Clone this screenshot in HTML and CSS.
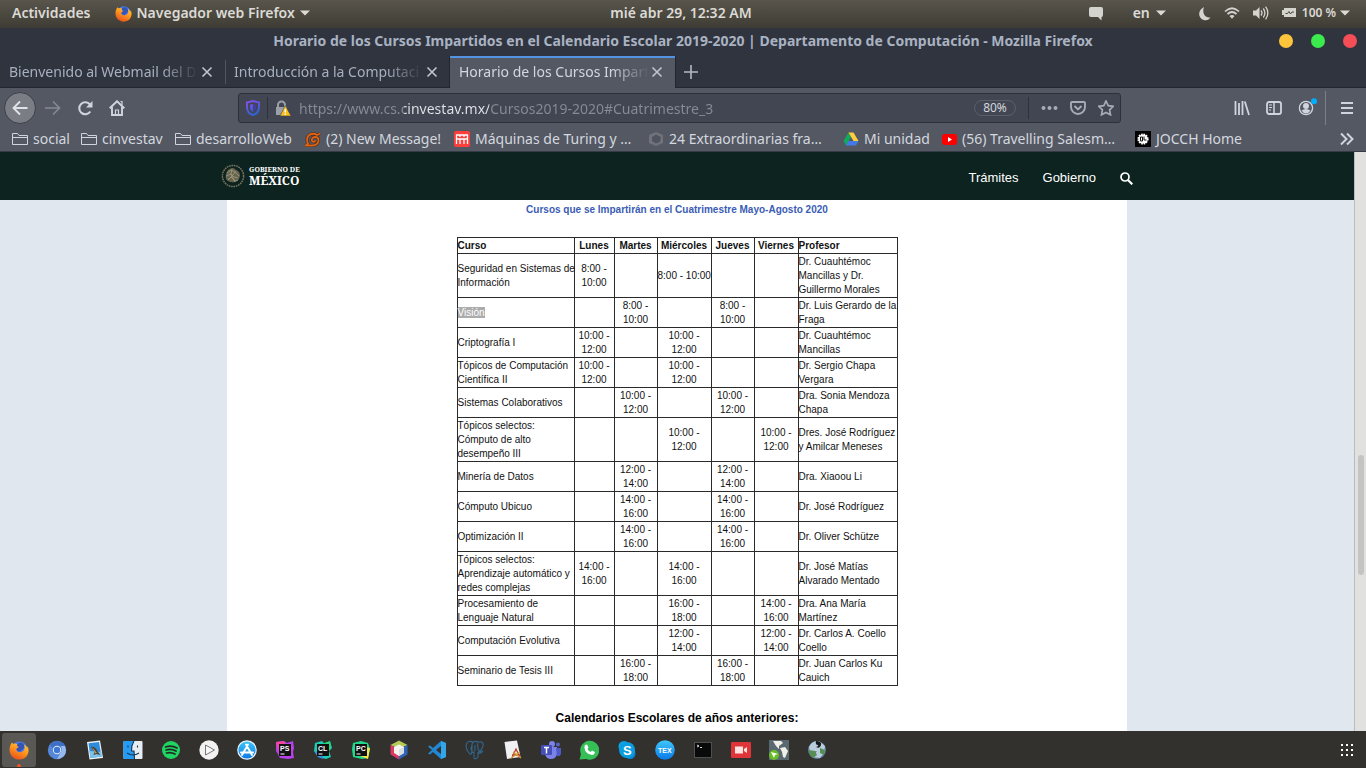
FILE: index.html
```html
<!DOCTYPE html>
<html lang="es">
<head>
<meta charset="utf-8">
<title>Horario de los Cursos Impartidos en el Calendario Escolar 2019-2020</title>
<link rel="stylesheet" href="styles.css">
</head>
<body>
<svg class="defs" width="0" height="0" aria-hidden="true">
  <defs>
    <linearGradient id="fox" x1="0.8" y1="0" x2="0.3" y2="1"><stop offset="0" stop-color="#ffd03a"/><stop offset="0.45" stop-color="#ff9a1f"/><stop offset="1" stop-color="#e8501c"/></linearGradient>
    <linearGradient id="sky" x1="0" y1="0" x2="0" y2="1"><stop offset="0" stop-color="#3fc8fb"/><stop offset="1" stop-color="#0a78e6"/></linearGradient>
    <linearGradient id="shield" x1="0" y1="0" x2="0.4" y2="1"><stop offset="0" stop-color="#8a4de8"/><stop offset="1" stop-color="#2f63d8"/></linearGradient>
    <symbol id="firefox" viewBox="0 0 20 20">
      <circle cx="10.4" cy="9.4" r="8" fill="#4a7be8"/>
      <path d="M8 4c1.500-1.500 5-2 6.500 0s1 4-.5 5-2 3-4.500 2.500S7 8 8 4z" fill="#3554b8"/>
      <path d="M3 2.500L4.500 4C6 3.200 7.500 3.600 8.500 4.600 7.500 5.400 8 6.500 9.800 6.700 9.200 8 7.200 8 7.200 9.500c.6 3 4.800 3.700 7 1.500 1.800-1.800 1.800-4 .8-6.500 2 1 2.800 2.300 3.200 4l.3-2.500C20 9 20 13 17.600 16.300 14.500 20.500 6.500 21 2.500 16 -.5 12 .2 6 3 2.500z" fill="url(#fox)"/>
    </symbol>
    <symbol id="folder" viewBox="0 0 16 16"><path d="M.5 13.500V2.500h5l1.500 2h8.500v9zM.5 6.500h15" fill="none" stroke="#d0d4dc"/></symbol>
    <symbol id="close" viewBox="0 0 12 12"><path d="M1.500 1.500l9 9M10.500 1.500l-9 9" stroke="#c0c5ce" stroke-width="1.600" fill="none"/></symbol>
    <symbol id="down" viewBox="0 0 10 6"><path d="M0 .5h10L5 5.500z" fill="#dcdad5"/></symbol>
  </defs>
</svg>

<header class="topbar">
  <div class="top-left">
    <button class="plain">Actividades</button>
    <button class="plain app-menu"><svg width="17" height="17"><use href="#firefox"/></svg>Navegador web Firefox<svg width="10" height="6"><use href="#down"/></svg></button>
  </div>
  <button class="plain clock">mié abr 29, 12:32 AM</button>
  <div class="top-right">
    <button class="plain bubble" aria-label="Mensajes"><svg width="14" height="15" viewBox="0 0 14 15"><path d="M2 1h10q2 0 2 2v6q0 2-1.500 2v3.500L9 11H2q-2 0-2-2V3q0-2 2-2z" fill="#d5d3ce"/></svg></button>
    <button class="plain lang">en<svg width="10" height="6"><use href="#down"/></svg></button>
    <button class="plain status" aria-label="Sistema">
      <svg width="12" height="15" viewBox="0 0 12 15"><path d="M5 1C-1 4-1.500 11 4 13.700c3.500 1.300 6 0 7.500-2.200C6 12 2.800 7 5 1z" fill="#d5d3ce"/></svg>
      <svg width="16" height="14" viewBox="0 0 16 14"><g fill="none" stroke="#d5d3ce" stroke-width="1.700"><path d="M1 5.500q7-6.500 14 0M3.500 8q4.500-4 9 0"/></g><path d="M5.500 10q2.500-2 5 0L8 12.700z" fill="#d5d3ce"/></svg>
      <svg width="16" height="14" viewBox="0 0 16 14"><path d="M0 4.500h3l3.500-3.500v12L3 9.500H0z" fill="#d5d3ce"/><g fill="none" stroke="#d5d3ce" stroke-width="1.300"><path d="M8 4.500q2 2.500 0 5M10.300 2.500q3.200 4.500 0 9M12.600.7q4.500 6.300 0 12.600"/></g></svg>
      <svg width="14" height="10" viewBox="0 0 14 10"><path d="M2 0h12v9H2V7H0V2h2z" fill="#d5d3ce"/><path d="M3.500 5.500h2L7 3.500l1.500 2.500L10 4h2" fill="none" stroke="#4b4840"/></svg>
      <span>100 %</span><svg width="10" height="6"><use href="#down"/></svg>
    </button>
  </div>
</header>

<div class="titlebar">
  <span class="title">Horario de los Cursos Impartidos en el Calendario Escolar 2019-2020 | Departamento de Computación - Mozilla Firefox</span>
  <div class="window-buttons"><button class="min" aria-label="Minimizar"></button><button class="max" aria-label="Maximizar"></button><button class="quit" aria-label="Cerrar"></button></div>
</div>

<nav class="tabs" aria-label="Pestañas">
  <div class="tab"><a href="#webmail">Bienvenido al Webmail del D</a><button class="plain" aria-label="Cerrar pestaña"><svg width="12" height="12"><use href="#close"/></svg></button></div>
  <div class="tab divided"><a href="#intro">Introducción a la Computaci</a><button class="plain" aria-label="Cerrar pestaña"><svg width="12" height="12"><use href="#close"/></svg></button></div>
  <div class="tab active"><a href="#horario">Horario de los Cursos Impart</a><button class="plain" aria-label="Cerrar pestaña"><svg width="12" height="12"><use href="#close"/></svg></button></div>
  <button class="plain new-tab" aria-label="Nueva pestaña"><svg width="14" height="14" viewBox="0 0 14 14"><path d="M7 0v14M0 7h14" stroke="#b4b9c3" stroke-width="1.600"/></svg></button>
</nav>

<div class="toolbar">
  <div class="nav-buttons">
    <button class="plain back" aria-label="Atrás"><svg width="16" height="16" viewBox="0 0 16 16"><path d="M15.500 8H1.500M8 1.500L1.500 8 8 14.500" fill="none" stroke="#dfe2e8" stroke-width="1.900"/></svg></button>
    <button class="plain" aria-label="Adelante"><svg width="16" height="16" viewBox="0 0 16 16"><path d="M0 8h14.500M8 1.500L14.500 8 8 14.500" fill="none" stroke="#858993" stroke-width="1.700"/></svg></button>
    <button class="plain" aria-label="Recargar"><svg width="16" height="16" viewBox="0 0 16 16"><path d="M13.300 11.500A6 6 0 1 1 13 4.500" fill="none" stroke="#d0d4dc" stroke-width="2.100"/><path d="M15.500 1v6.500H9z" fill="#d0d4dc"/></svg></button>
    <button class="plain" aria-label="Inicio"><svg width="16" height="16" viewBox="0 0 16 16"><path d="M.7 8.300L8 1.200l7.300 7.100M3 7v8h10V7" fill="none" stroke="#d0d4dc" stroke-width="1.900"/><path d="M6.500 15V10h3v5M11.500 1.500h1.500V5" fill="none" stroke="#d0d4dc" stroke-width="1.200"/></svg></button>
  </div>
  <div class="address">
    <svg width="14" height="16" viewBox="0 0 14 16"><path d="M7 1L13 2.500V7c0 4-2.500 7-6 8-3.500-1-6-4-6-8V2.500z" fill="none" stroke="url(#shield)" stroke-width="2"/><path d="M7 4l-3 .8V7c0 2.500 1 4 3 5z" fill="url(#shield)"/><path d="M7.500 4L10 4.800V7c0 2.500-1 4-2.500 5z" fill="#493ba5"/></svg>
    <span class="sep first"></span>
    <svg class="lock" width="16" height="16" viewBox="0 0 16 16"><path d="M3 8V5a3.500 3.500 0 0 1 7 0v3" fill="none" stroke="#9a9fa8" stroke-width="2"/><path d="M1 7h11v8H1z" fill="#9a9fa8"/><path d="M10.300 5.500L16 16H5z" fill="#ffbf1a" stroke="#414652" stroke-width=".6"/><path d="M10.300 9v3.500M10.300 13.500V15" stroke="#fff" stroke-width="1.400"/></svg>
    <input class="url" type="text" aria-label="Dirección" value="https://www.cs.cinvestav.mx/Cursos2019-2020#Cuatrimestre_3">
    <button class="plain zoom">80%</button>
    <span class="sep"></span>
    <button class="plain" aria-label="Acciones"><svg width="17" height="6" viewBox="0 0 17 6"><g fill="#a6abb6"><circle cx="2.500" cy="3" r="2"/><circle cx="8.500" cy="3" r="2"/><circle cx="14.500" cy="3" r="2"/></g></svg></button>
    <button class="plain" aria-label="Pocket"><svg width="16" height="16" viewBox="0 0 16 16"><path d="M2 2h12q1 0 1 1v4a7 7 0 0 1-14 0V3q0-1 1-1zM4.500 6L8 9.500 11.500 6" fill="none" stroke="#a6abb6" stroke-width="1.900"/></svg></button>
    <button class="plain" aria-label="Marcador"><svg width="16" height="16" viewBox="0 0 16 16"><path d="M8 1l2.200 4.600 5 .7-3.600 3.500.9 5L8 12.400l-4.500 2.400.9-5L.8 6.300l5-.7z" fill="none" stroke="#a6abb6" stroke-width="1.700"/></svg></button>
  </div>
  <div class="tools">
    <button class="plain" aria-label="Biblioteca"><svg width="16" height="16" viewBox="0 0 16 16"><path d="M1.500 1v14M5 3v12M8.500 1v14M10.800 1.500L15 15" stroke="#d0d4dc" stroke-width="1.800"/></svg></button>
    <button class="plain" aria-label="Barra lateral"><svg width="16" height="14" viewBox="0 0 16 14"><rect x="1" y="1" width="14" height="12" rx="2" fill="none" stroke="#d0d4dc" stroke-width="1.800"/><path d="M8 1v12" stroke="#d0d4dc" stroke-width="1.500"/><path d="M3 4h3M3 6.500h3M3 9h2" stroke="#d0d4dc"/></svg></button>
    <button class="plain" aria-label="Cuenta"><svg width="20" height="20" viewBox="0 0 20 20"><circle cx="8" cy="10" r="6.600" fill="none" stroke="#d0d4dc" stroke-width="1.300"/><circle cx="8" cy="8" r="3" fill="#d0d4dc"/><path d="M3.500 12.500q4.500-3 9 0-2 3-4.500 3t-4.500-3z" fill="#d0d4dc"/><circle cx="16" cy="3.200" r="3" fill="#00aeff"/></svg></button>
    <span class="tool-sep"></span>
    <button class="plain" aria-label="Menú"><svg width="12" height="12" viewBox="0 0 12 12"><path d="M0 1h12M0 6h12M0 11h12" stroke="#d0d4dc" stroke-width="2"/></svg></button>
  </div>
</div>

<nav class="bookmarks" aria-label="Marcadores">
  <a href="#b1"><svg width="16" height="16"><use href="#folder"/></svg>social</a>
  <a href="#b2"><svg width="16" height="16"><use href="#folder"/></svg>cinvestav</a>
  <a href="#b3"><svg width="16" height="16"><use href="#folder"/></svg>desarrolloWeb</a>
  <a href="#b4"><svg width="16" height="16" viewBox="0 0 16 16"><g id="leaf" fill="none" stroke-linejoin="round"><path d="M15 2.500L12 4C8 1.500 3 3 2 8c0 2 0 3.500 1 4.500L1 14.500h6c4 0 7-2.500 6.500-6S8 5 7 8s2.500 3.500 3.500 1.500" stroke="#4a2717" stroke-width="3"/><path d="M15 2.500L12 4C8 1.500 3 3 2 8c0 2 0 3.500 1 4.500L1 14.500h6c4 0 7-2.500 6.500-6S8 5 7 8s2.500 3.500 3.500 1.500" stroke="#df6414" stroke-width="1.800"/></g></svg>(2) New Message!</a>
  <a href="#b5"><svg width="16" height="16" viewBox="0 0 16 16"><rect width="16" height="16" rx="2" fill="#fa3f3d"/><path d="M2 4h12M2.500 4v9M6 8v5M10 8v5M13.500 4v9M2 8h12M6 4v2M10 4v2" stroke="#fff" stroke-width="1.300"/></svg>Máquinas de Turing y …</a>
  <a href="#b6"><svg width="16" height="16" viewBox="0 0 16 16"><path d="M1 4l7-3 7 3v8l-7 3-7-3z" fill="#71737a"/><path d="M4 6l4-2.500L13 6l-1 5-4 1.500L4 10z" fill="#50545f"/></svg>24 Extraordinarias fra…</a>
  <a href="#b7"><svg width="16" height="16" viewBox="0 0 16 16"><path d="M5.500 1.500L.5 10 3 14.500 8 6z" fill="#12a85d"/><path d="M5.500 1.500h5l5 8.500h-5z" fill="#ffce3d"/><path d="M5.500 10h10L13 14.500H3z" fill="#427be8"/></svg>Mi unidad</a>
  <a href="#b8"><svg width="16" height="16" viewBox="0 0 16 16"><rect x="1" y="3" width="15" height="11" rx="3" fill="#f00"/><path d="M7 6l4 2.500L7 11z" fill="#fff"/></svg>(56) Travelling Salesm…</a>
  <a href="#b9"><svg width="16" height="16" viewBox="0 0 16 16"><path d="M0 0h16v16H0z"/><circle cx="8" cy="8" r="4.600" fill="#fff" stroke="#fff" stroke-width="2" stroke-dasharray="1.600 .8"/><path d="M5.500 6h2v4h-2zM9 5.500V9h2.500" fill="none" stroke="#111"/></svg>JOCCH Home</a>
  <button class="plain" aria-label="Más marcadores"><svg width="14" height="14" viewBox="0 0 14 14"><path d="M1 1.500L6.500 7 1 12.500M7 1.500L12.500 7 7 12.500" fill="none" stroke="#d0d4dc" stroke-width="2"/></svg></button>
</nav>

<main class="viewport">
  <div class="page">
    <header class="site-header">
      <div class="site-inner">
        <a class="logo" href="#gob">
          <svg width="24" height="24" viewBox="0 0 24 24"><circle cx="12" cy="12" r="10.600" fill="none" stroke="#77735f" stroke-width="1.500" stroke-dasharray="1.700 .7"/><path d="M7 6q5-4 8 0 4 1 4 6-1 5-5 6-6 1-9-3-1-5 2-9z" fill="#66644f"/><path d="M6 9l4-3 4 2 4 4M5 12l5-2 3 3 4 1M7 16l3-3 4 4 3-1M11 5l-1 5 4 8M15 7l-4 5-4 4" fill="none" stroke="#a19b80" stroke-width=".8"/></svg>
          <span class="logo-text"><span class="gob">GOBIERNO DE</span><span class="mex">MÉXICO</span></span>
        </a>
        <nav class="site-nav"><a href="#tramites">Trámites</a><a href="#gobierno">Gobierno</a><a href="#buscar" aria-label="Buscar"><svg width="13" height="13" viewBox="0 0 13 13"><circle cx="5" cy="5" r="4" fill="none" stroke="#fff" stroke-width="1.700"/><path d="M8 8l4.300 4.300" stroke="#fff" stroke-width="2.200"/></svg></a></nav>
      </div>
    </header>
    <article class="content">
      <h2>Cursos que se Impartirán en el Cuatrimestre Mayo-Agosto 2020</h2>
      <table>
        <colgroup><col class="c1"><col class="c2"><col class="c3"><col class="c4"><col class="c3"><col class="c5"><col class="c6"></colgroup>
        <thead><tr><th>Curso</th><th>Lunes</th><th>Martes</th><th>Miércoles</th><th>Jueves</th><th>Viernes</th><th>Profesor</th></tr></thead>
        <tbody>
          <tr class="tall"><td>Seguridad en Sistemas de<br>Información</td><td>8:00 -<br>10:00</td><td></td><td>8:00 - 10:00</td><td></td><td></td><td>Dr. Cuauhtémoc<br>Mancillas y Dr.<br>Guillermo Morales</td></tr>
          <tr><td><mark>Visión</mark></td><td></td><td>8:00 -<br>10:00</td><td></td><td>8:00 -<br>10:00</td><td></td><td>Dr. Luis Gerardo de la<br>Fraga</td></tr>
          <tr><td>Criptografía I</td><td>10:00 -<br>12:00</td><td></td><td>10:00 -<br>12:00</td><td></td><td></td><td>Dr. Cuauhtémoc<br>Mancillas</td></tr>
          <tr><td>Tópicos de Computación<br>Científica II</td><td>10:00 -<br>12:00</td><td></td><td>10:00 -<br>12:00</td><td></td><td></td><td>Dr. Sergio Chapa<br>Vergara</td></tr>
          <tr><td>Sistemas Colaborativos</td><td></td><td>10:00 -<br>12:00</td><td></td><td>10:00 -<br>12:00</td><td></td><td>Dra. Sonia Mendoza<br>Chapa</td></tr>
          <tr class="tall"><td>Tópicos selectos:<br>Cómputo de alto<br>desempeño III</td><td></td><td></td><td>10:00 -<br>12:00</td><td></td><td>10:00 -<br>12:00</td><td>Dres. José Rodríguez<br>y Amilcar Meneses</td></tr>
          <tr><td>Minería de Datos</td><td></td><td>12:00 -<br>14:00</td><td></td><td>12:00 -<br>14:00</td><td></td><td>Dra. Xiaoou Li</td></tr>
          <tr><td>Cómputo Ubicuo</td><td></td><td>14:00 -<br>16:00</td><td></td><td>14:00 -<br>16:00</td><td></td><td>Dr. José Rodríguez</td></tr>
          <tr><td>Optimización II</td><td></td><td>14:00 -<br>16:00</td><td></td><td>14:00 -<br>16:00</td><td></td><td>Dr. Oliver Schütze</td></tr>
          <tr class="tall"><td>Tópicos selectos:<br>Aprendizaje automático y<br>redes complejas</td><td>14:00 -<br>16:00</td><td></td><td>14:00 -<br>16:00</td><td></td><td></td><td>Dr. José Matías<br>Alvarado Mentado</td></tr>
          <tr><td>Procesamiento de<br>Lenguaje Natural</td><td></td><td></td><td>16:00 -<br>18:00</td><td></td><td>14:00 -<br>16:00</td><td>Dra. Ana María<br>Martínez</td></tr>
          <tr><td>Computación Evolutiva</td><td></td><td></td><td>12:00 -<br>14:00</td><td></td><td>12:00 -<br>14:00</td><td>Dr. Carlos A. Coello<br>Coello</td></tr>
          <tr><td>Seminario de Tesis III</td><td></td><td>16:00 -<br>18:00</td><td></td><td>16:00 -<br>18:00</td><td></td><td>Dr. Juan Carlos Ku<br>Cauich</td></tr>
        </tbody>
      </table>
      <h3>Calendarios Escolares de años anteriores:</h3>
    </article>
  </div>
  <div class="scrollbar"><div class="before"></div><div class="thumb"></div><div class="after"></div></div>
</main>

<footer class="dock">
  <button class="plain running" aria-label="Firefox"><svg width="20" height="20"><use href="#firefox"/></svg></button>
  <button class="plain" aria-label="Chromium"><svg width="20" height="20" viewBox="0 0 20 20"><circle cx="10" cy="10" r="9.200" fill="#5487d8"/><path d="M10 1q6 0 8.300 5H10a4 4 0 0 0-3.800 3L3 4.500Q6 1 10 1z" fill="#3f6fc4"/><path d="M10 19l4-7q1.500-3 0-6h4q3 9-4 12-2 1-4 1z" fill="#98b9ee"/><circle cx="10" cy="10" r="4.200" fill="#dce8fb"/><circle cx="10" cy="10" r="3.200" fill="#3f76d2"/></svg></button>
  <button class="plain" aria-label="Correo"><svg width="20" height="20" viewBox="0 0 20 20"><path d="M2 2l13-1.500L18 18 4.500 19.500z" fill="#edf2f5"/><path d="M3.500 3.200L14 2l2.500 14.500L5.500 18z" fill="#2e8bdb"/><path d="M4.500 11l12 1 .3 4.500L5.500 18z" fill="#79c3ec"/><path d="M6 7q4-1 7 5l2.500 3-4-1-3 1 1-3z" fill="#4b4030"/><path d="M7 7l5 6-2 .5z" fill="#b99a69"/></svg></button>
  <button class="plain" aria-label="Archivos"><svg width="20" height="20" viewBox="0 0 20 20"><rect x=".5" y="1" width="19" height="18" rx="1" fill="#e6edf3"/><path d="M1.500 1H11Q8 6 8.500 11H11l.5 8h-10Q.5 19 .5 18V2q0-1 1-1z" fill="#259cf3"/><path d="M11 1Q8 6 8.500 11H11l.5 8M5 5.500v2M14.500 5.500v2M4 13q6 4 12 0" fill="none" stroke="#18344d" stroke-width="1.100"/></svg></button>
  <button class="plain" aria-label="Spotify"><svg width="20" height="20" viewBox="0 0 20 20"><circle cx="10" cy="10" r="9" fill="#1fd662"/><path d="M4.500 7q6-2 11.500 1M5 10q5-1.500 10 1M5.500 13q4.500-1.200 8.500 1" fill="none" stroke="#242824" stroke-width="1.700" stroke-linecap="round"/></svg></button>
  <button class="plain" aria-label="Reproductor"><svg width="20" height="20" viewBox="0 0 20 20"><circle cx="10" cy="10" r="9.700" fill="#f2f2f2"/><path d="M6.500 5l9 5-9 5z" fill="#f8f8f8" stroke="#777"/></svg></button>
  <button class="plain" aria-label="Tienda"><svg width="20" height="20" viewBox="0 0 20 20"><circle cx="10" cy="10" r="9.200" fill="url(#sky)" stroke="#eaf4fc" stroke-width="1.200"/><path d="M11 4.500L5 15M9 4.500L15 15M4 12.500h12" stroke="#fff" stroke-width="1.900" stroke-linecap="round"/></svg></button>
  <button class="plain" aria-label="PhpStorm"><svg width="20" height="20" viewBox="0 0 20 20"><path d="M1 2l8-1 3 2 6-2 1 7-1 4 1 6-6 1-8-1-4-7z" fill="#b641ed"/><path d="M1 2l8-1 2 4-7 8z" fill="#f6459c"/><rect x="4" y="4" width="12" height="12" fill="#111"/><text x="5" y="11" font-size="7">PS</text><path d="M5.500 14h4" stroke="#fff"/></svg></button>
  <button class="plain" aria-label="CLion"><svg width="20" height="20" viewBox="0 0 20 20"><path d="M2 3l7-2 3 3 5-3 2 7-3 3 2 6-5 2-8-2-4-6z" fill="#1bcdb3"/><path d="M1 11l8 3 1 5-5-2z" fill="#398aee"/><path d="M11 3l6-2 1 8-4 2z" fill="#25d77d"/><rect x="4" y="4" width="12" height="12" fill="#111"/><text x="5" y="11" font-size="7">CL</text><path d="M5.500 14h4" stroke="#fff"/></svg></button>
  <button class="plain" aria-label="PyCharm"><svg width="20" height="20" viewBox="0 0 20 20"><path d="M2 3l8-2 7 2 2 6-2 9-6 1-9-2-1-8z" fill="#20d889"/><path d="M13 7l6 1-2 11-8-3z" fill="#f1e84b"/><rect x="4" y="4" width="12" height="12" fill="#111"/><text x="5" y="11" font-size="7">PC</text><path d="M5.500 14h4" stroke="#fff"/></svg></button>
  <button class="plain" aria-label="NetBeans"><svg width="20" height="20" viewBox="0 0 20 20"><path d="M10 .5L18.500 5 10 9 1.500 5z" fill="#b5cb58"/><path d="M1.500 5l8.500 4v10.500l-8.500-5z" fill="#d93b62"/><path d="M18.500 5L10 9v10.500l8.500-5z" fill="#2e65b9"/><path d="M10 4.500l5 2.500v6l-5 3-5-3V7z" fill="#f5f5ed"/><path d="M10 9.500l5-2.500v6l-5 3z" fill="#dadfe4"/></svg></button>
  <button class="plain" aria-label="Visual Studio Code"><svg width="20" height="20" viewBox="0 0 20 20"><path d="M14 1l5 2v14l-5 2L6 12l-3 2.500-2-1L5 10 1 6.500l2-1L6 8zm0 5l-5 4 5 4z" fill="#2188d1"/><path d="M14 1l5 2v14l-5 2z" fill="#35a5ea"/></svg></button>
  <button class="plain" aria-label="PostgreSQL"><svg width="20" height="20" viewBox="0 0 20 20"><path d="M8 2Q3 0 1.500 4T4 13q2 3 3-1V4q2-4 6-2 6-1 5 4-1 4-4 6 3 0 4-1-2 3-5 2v4q-2 3-4 1V12q-2 1-3 0M7 6q-2 2 0 5M13 3q-1 4 1 8M10 5v6" fill="none" stroke="#31668d" stroke-width="1.100"/></svg></button>
  <button class="plain" aria-label="Editor de textos"><svg width="20" height="20" viewBox="0 0 20 20"><path d="M1.500 2L14 .5 17.500 17 4 19z" fill="#f0f1f3"/><path d="M9 18l4-9 4 8M9 15h8" fill="none" stroke="#b83f28" stroke-width="1.300"/><path d="M8 18l9-6M10 12l8 6" stroke="#d69a36" stroke-width="1.300"/></svg></button>
  <button class="plain" aria-label="Teams"><svg width="20" height="20" viewBox="0 0 20 20"><circle cx="17" cy="4.500" r="2" fill="#5964c7"/><circle cx="11" cy="4" r="3" fill="#7b83eb"/><path d="M6 7h10v7q-1 5-6 5t-6-5z" fill="#7b83eb"/><path d="M15 8h5v6q-1 3-4 2z" fill="#5059c9"/><rect y="5" width="11" height="10" rx="1" fill="#464eb8"/><path d="M3 7.500h5M5.500 7.500v6" stroke="#fff" stroke-width="1.500"/></svg></button>
  <button class="plain" aria-label="WhatsApp"><svg width="20" height="20" viewBox="0 0 20 20"><path d="M.5 19.500L2 14A9.500 9.500 0 1 1 7 19z" fill="#35bf57"/><path d="M6 5l2-.5 1.500 3-1 1.500q1 2 3 3l1.500-1.500 3 1.500q-.5 3-3 3Q6 13.500 5.500 8 5.300 6 6 5z" fill="#fff"/></svg></button>
  <button class="plain" aria-label="Skype"><svg width="20" height="20" viewBox="0 0 20 20"><circle cx="7" cy="6.500" r="5.500" fill="#0aa6e9"/><circle cx="13" cy="13.500" r="5.500" fill="#0788d2"/><circle cx="10" cy="10" r="8" fill="#0b9ddf"/><text x="6" y="14.500" font-size="13">S</text></svg></button>
  <button class="plain" aria-label="TeX"><svg width="20" height="20" viewBox="0 0 20 20"><circle cx="10" cy="10" r="9.800" fill="url(#sky)"/><text x="3" y="13" font-size="7">TEX</text></svg></button>
  <button class="plain" aria-label="Terminal"><svg width="20" height="20" viewBox="0 0 20 20"><rect x="1.500" y="2.500" width="17" height="15" fill="#090b0b" stroke="#4c5050"/><path d="M4 5l2 1-2 1M7 7.500h2" fill="none" stroke="#eee" stroke-width=".9"/></svg></button>
  <button class="plain" aria-label="Grabador"><svg width="20" height="20" viewBox="0 0 20 20"><rect y="2" width="20" height="16" rx="1" fill="#df3538"/><path d="M4 6.500h8v7H4zM13 9l3-2v6l-3-2z" fill="#ffe4df"/></svg></button>
  <button class="plain" aria-label="Mapas"><svg width="20" height="20" viewBox="0 0 20 20"><path d="M0 0h20v20H0z" fill="#5a6872"/><path d="M4 1h8l2 2-4 3v3l-3-3zM11 8l5-1 3 4-3 7-2-1-1-5z" fill="#f0f0e9"/><circle cx="5" cy="15" r="5" fill="#68bd24"/><path d="M2 12l7 2-3 1-1 3z" fill="#fff"/></svg></button>
  <button class="plain" aria-label="Mundo"><svg width="20" height="20" viewBox="0 0 20 20"><circle cx="10" cy="10" r="9" fill="#5c7da2"/><path d="M2 7q3-7 10-6l6 5-1 7-4 5-8-1 5-6-7 1z" fill="#b9cddd"/><path d="M2 10l6 1 2 4-4 3q-4-3-4-8zM13 8l5 2-1 5-4-2z" fill="#558e50"/><path d="M9 1q6 0 5 4-1 4-5 2 3-1 2-2-3 0-2-4z" fill="#171b20"/></svg></button>
  <button class="plain apps" aria-label="Mostrar aplicaciones"><svg width="14" height="14" viewBox="0 0 14 14"><path d="M1 2h12M1 7h12M1 12h12" stroke="#fff" stroke-width="2" stroke-dasharray="2 3"/></svg></button>
</footer>
</body>
</html>
```

FILE: styles.css
```css
* { box-sizing: border-box; }
body { margin: 0; height: 100vh; display: flex; flex-direction: column; overflow: hidden; background: #545863; font: 14px/20px "Noto Sans", "Open Sans", sans-serif; color: #d3d7df; }
.defs { position: absolute; }
svg { flex: none; display: block; }
a { color: inherit; text-decoration: none; }
.plain { appearance: none; border: 0; background: none; padding: 0; color: inherit; font: inherit; display: flex; align-items: center; justify-content: center; }

.topbar { flex: none; height: 28px; display: grid; grid-template-columns: 1fr auto 1fr; align-items: center; padding: 0 16px 2px 12px; background: linear-gradient(#59554c, #3e3c34); color: #dcdad5; font-weight: 600; text-shadow: 0 1px 1px #25231e; }
.top-left { display: flex; gap: 24px; }
.app-menu { gap: 5px; }
.top-right { display: flex; justify-content: flex-end; align-items: center; }
.bubble { margin-right: 30px; }
.lang { gap: 6px; margin-right: 33px; }
.status { gap: 13px; font-size: 12px; }
.status span { margin: 0 -9px 0 -7px; }

.titlebar { flex: none; height: 28px; display: flex; align-items: center; padding: 0 9px 2px 0; background: #2f343f; color: #a9b2c1; font-weight: 700; }
.title { flex: 1; padding-left: 87px; text-align: center; white-space: nowrap; overflow: hidden; }
.window-buttons { display: flex; gap: 18px; }
.window-buttons button { width: 14px; height: 14px; padding: 0; border: 0; border-radius: 50%; }
.min { background: #fdc53b; }
.max { background: #3bea4d; }
.quit { background: #f54e56; }

.tabs { flex: none; height: 32px; display: flex; background: #2f343f; box-shadow: inset 0 -1px #22262f; }
.tab { width: 225px; display: flex; align-items: center; gap: 2px; padding: 0 12px 0 9px; color: #a8b0bf; }
.tab a { flex: 1; overflow: hidden; white-space: nowrap; mask-image: linear-gradient(to right, #000 80%, transparent); }
.divided { background: linear-gradient(#50555f, #50555f) 0 50% / 1px 24px no-repeat; }
.active { background: linear-gradient(#5294e2 2px, #545863 2px); color: #d3d7df; box-shadow: -1px 0 #22262f, 1px 0 #22262f; }
.new-tab { width: 32px; }

.toolbar { flex: none; height: 40px; display: flex; align-items: center; padding: 0 13px 0 4px; }
.nav-buttons { display: flex; align-items: center; gap: 16px; flex: 0 0 234px; }
.nav-buttons .back { width: 32px; height: 32px; border: 1px solid #3d4048; border-radius: 50%; background: #7a7d84; margin-right: -7px; }
.address { flex: 1; min-width: 0; height: 30px; display: flex; align-items: center; gap: 12px; padding: 0 6px 0 7px; border: 1px solid #2b303b; border-radius: 3px; background: #414652; }
.sep { flex: none; width: 1px; height: 22px; background: #2c313c; }
.first { margin: 0 -5px; }
.url { flex: 1; min-width: 0; height: 26px; margin-left: -4px; padding: 0; border: 0; outline: 0; font: inherit; color: transparent; background: linear-gradient(to right, #868b96 105px, #e2e5ea 105px, #e2e5ea 190px, #868b96 190px); -webkit-background-clip: text; background-clip: text; }
.zoom { width: 42px; height: 16px; border: 1px solid #5a5f6b; border-radius: 8px; font-size: 12px; line-height: 14px; }
.tools { display: flex; align-items: center; gap: 16px; margin-left: 113px; }
.tool-sep { width: 1px; height: 34px; margin: 0 -1px 0 -9px; background: #7a7e88; }

.bookmarks { flex: none; height: 24px; display: grid; grid-template-columns: 69px 94px 130px 149px 194px 195px 98px 194px 1fr auto; align-items: center; padding: 0 12px 1px; border-bottom: 1px solid #363b48; line-height: 18px; }
.bookmarks a { display: flex; align-items: center; gap: 5px; white-space: nowrap; }

.viewport { flex: 1; min-height: 0; display: flex; font-family: "Liberation Sans", Arial, sans-serif; }
.page { flex: 1; min-width: 0; display: flex; flex-direction: column; align-items: center; background: #e0e7ee; overflow: hidden; }
.site-header { flex: none; align-self: stretch; height: 48px; display: flex; justify-content: center; background: #0d231f; color: #fff; }
.site-inner { width: 912px; display: flex; align-items: center; justify-content: space-between; }
.logo { display: flex; gap: 4px; align-items: center; font-family: "Noto Serif", "Liberation Serif", serif; font-weight: 700; }
.logo-text { display: flex; flex-direction: column; }
.gob { font-size: 7px; line-height: 10px; }
.mex { font-size: 12px; line-height: 12px; }
.site-nav { display: flex; align-items: center; gap: 24px; font-size: 13px; padding-top: 4px; }
.content { flex: 1; width: 900px; max-width: 100%; background: #fff; color: #111; display: flex; flex-direction: column; align-items: center; }
h2 { margin: 0; padding: 3px 0 20px; font-size: 10px; line-height: 14px; color: #3a5cb5; }
table { border-collapse: collapse; table-layout: fixed; width: 440px; font-size: 10px; line-height: 14px; }
.c1 { width: 117px; }
.c2 { width: 40px; }
.c3 { width: 43px; }
.c4 { width: 54px; }
.c5 { width: 44px; }
.c6 { width: 99px; }
th, td { border: 1px solid #2a2a2a; padding: 1px 0 0; text-align: center; vertical-align: middle; white-space: nowrap; }
th:first-child, th:last-child, td:first-child, td:last-child { text-align: left; }
thead tr { height: 16px; }
tbody tr { height: 30px; }
tbody .tall { height: 44px; }
mark { background: #acacac; color: #fff; }
h3 { margin: 0; padding-top: 24px; font-size: 12px; line-height: 16px; color: #000; }
.scrollbar { width: 12px; display: flex; flex-direction: column; align-items: center; background: #e1e2df; border-left: 1px solid #babcb9; }
.before { flex: 303; }
.thumb { flex: 120; width: 6px; border-radius: 3px; background: #c3c5c4; }
.after { flex: 156; }

.dock { flex: none; height: 37px; display: flex; align-items: center; padding: 0 0 0 2px; gap: 4px; background: #33312e; }
.dock button { width: 34px; height: 34px; }
.dock .running { border-radius: 3px; background: radial-gradient(circle at 17px 33px, #e95420 2px, transparent 2px), #5a5855; }
.dock .apps { margin-left: auto; margin-right: 2px; }
.dock text { font-family: "Liberation Sans", Arial, sans-serif; font-weight: 700; fill: #fff; }
```
